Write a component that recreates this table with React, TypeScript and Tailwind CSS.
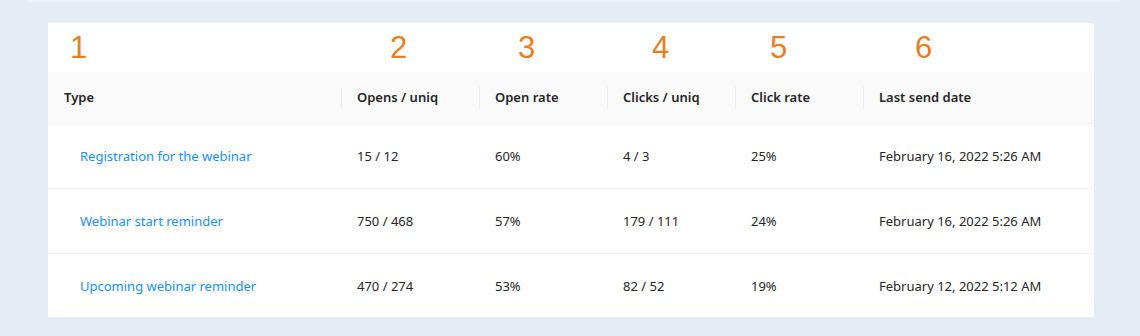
import React from 'react';

type Row = {
  type: string;
  opens: string;
  openRate: string;
  clicks: string;
  clickRate: string;
  lastSend: string;
};

const rows: Row[] = [
  { type: 'Registration for the webinar', opens: '15 / 12', openRate: '60%', clicks: '4 / 3', clickRate: '25%', lastSend: 'February 16, 2022 5:26 AM' },
  { type: 'Webinar start reminder', opens: '750 / 468', openRate: '57%', clicks: '179 / 111', clickRate: '24%', lastSend: 'February 16, 2022 5:26 AM' },
  { type: 'Upcoming webinar reminder', opens: '470 / 274', openRate: '53%', clicks: '82 / 52', clickRate: '19%', lastSend: 'February 12, 2022 5:12 AM' },
];

const headers = ['Opens / uniq', 'Open rate', 'Clicks / uniq', 'Click rate', 'Last send date'];
const colWidths = ['w-[138px]', 'w-[128px]', 'w-[128px]', 'w-[128px]', 'flex-1'];

const App: React.FC = () => {
  return (
    <div className="w-[1140px] h-[336px] bg-[#e4ecf5] font-['Noto_Sans','Open_Sans',sans-serif] overflow-hidden">
      <div className="h-[2px] ml-[28px] mr-[20px] bg-[#edf2f9]" />
      <div className="ml-[48px] mt-[21px] w-[1046px] bg-white">
        {/* column numbers */}
        <div className="flex h-[49px] items-center text-[#e67e22] text-[31px] font-['Liberation_Sans',Arial,sans-serif] leading-none">
          <div className="w-[293px] pl-[22px]">1</div>
          <div className="w-[138px] pl-[49px]">2</div>
          <div className="w-[128px] pl-[39px]">3</div>
          <div className="w-[128px] pl-[45px]">4</div>
          <div className="w-[128px] pl-[35px]">5</div>
          <div className="flex-1 pl-[52px]">6</div>
        </div>

        {/* header */}
        <div className="flex h-[52px] items-center bg-[#fafafa] border-b border-[#f0f0f0] text-[13px] font-semibold text-[#262626]">
          <div className="w-[293px] pl-4">Type</div>
          {headers.map((h, i) => (
            <div key={h} className={`${colWidths[i]} relative pl-4`}>
              <span className="absolute left-0 top-1/2 -translate-y-1/2 h-[22px] w-px bg-[#ececec]" />
              {h}
            </div>
          ))}
        </div>

        {/* body */}
        {rows.map((r, i) => {
          const last = i === rows.length - 1;
          return (
            <div
              key={r.type}
              className={`flex items-center pt-[2px] text-[13px] text-[#262626] ${last ? 'h-[63px]' : 'h-[65px] border-b border-[#f0f0f0]'}`}
            >
              <div className="w-[293px] pl-8 text-[#1890ff]">{r.type}</div>
              <div className="w-[138px] pl-4">{r.opens}</div>
              <div className="w-[128px] pl-4">{r.openRate}</div>
              <div className="w-[128px] pl-4">{r.clicks}</div>
              <div className="w-[128px] pl-4">{r.clickRate}</div>
              <div className="flex-1 pl-4">{r.lastSend}</div>
            </div>
          );
        })}
      </div>
    </div>
  );
};

export default App;
